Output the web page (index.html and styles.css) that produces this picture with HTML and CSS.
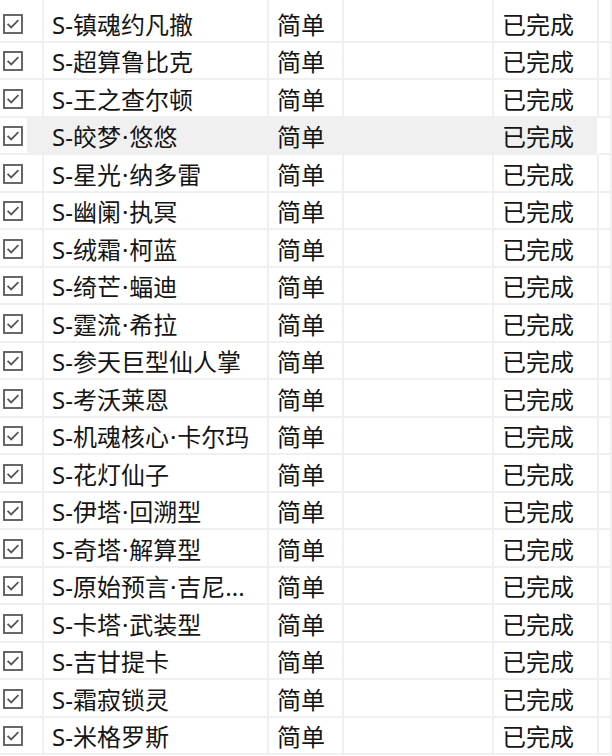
FILE: index.html
```html
<!DOCTYPE html>
<html lang="zh-CN">
<head>
<meta charset="utf-8">
<link rel="stylesheet" href="styles.css">
</head>
<body>
<div class="grid">
  <div class="top"><span class="c0"></span><span class="c1"></span><span class="c2"></span><span class="c3"></span><span class="c4"></span><span class="c5"></span></div>
</div>
<div class="grid" id="rows"></div>
<script src="app.js"></script>
</body>
</html>
```

FILE: app.js
```js
const names = [
  "S-镇魂约凡撤","S-超算鲁比克","S-王之查尔顿","S-皎梦·悠悠","S-星光·纳多雷",
  "S-幽阑·执冥","S-绒霜·柯蓝","S-绮芒·蝠迪","S-霆流·希拉","S-参天巨型仙人掌",
  "S-考沃莱恩","S-机魂核心·卡尔玛","S-花灯仙子","S-伊塔·回溯型","S-奇塔·解算型",
  "S-原始预言·吉尼...","S-卡塔·武装型","S-吉甘提卡","S-霜寂锁灵","S-米格罗斯"
];
const box = '<svg width="20" height="20" viewBox="0 0 20 20"><rect x="1" y="1" width="18" height="18" fill="#fff" stroke="#585858" stroke-width="1.8"/><path d="M4.6 9.8 L8.2 13.4 L15.4 6.2" fill="none" stroke="#555" stroke-width="1.8"/></svg>';
const host = document.getElementById('rows');
names.forEach((n, i) => {
  const r = document.createElement('div');
  r.className = 'row' + (i === 3 ? ' hl' : '');
  const name = n.replace(/·/g, '<span class="dot">·</span>');
  r.innerHTML =
    '<div class="cell c0">' + box + '</div>' +
    '<div class="cell c1">' + name + '</div>' +
    '<div class="cell c2">简单</div>' +
    '<div class="cell c3"></div>' +
    '<div class="cell c4">已完成</div>' +
    '<div class="cell c5"></div>';
  host.appendChild(r);
});
```

FILE: styles.css
```css
html, body {
  margin: 0;
  padding: 0;
  background: #ffffff;
}
body {
  width: 612px;
  height: 756px;
  overflow: hidden;
  font-family: "Noto Sans", "Noto Sans CJK SC", sans-serif;
  color: #151515;
}
.grid {
  display: flex;
  flex-direction: column;
}
.top, .row {
  display: grid;
  grid-template-columns: 44px 225px 75px 150px 105px 1fr;
}
.top {
  height: 5px;
}
.top span {
  border-right: 2px solid #f0f0f0;
}
.row {
  height: 37.5px;
  box-sizing: border-box;
}
.cell {
  border-right: 2px solid #f0f0f0;
  border-bottom: 2px solid #f0f0f0;
  display: flex;
  align-items: center;
  padding-left: 8px;
  font-size: 24px;
  line-height: 1;
  white-space: nowrap;
  overflow: hidden;
  padding-top: 4px;
}
.dot {
  font-family: "Noto Sans", sans-serif;
  margin: 0 1px;
}
.cell.c0 {
  padding-left: 3px;
  padding-top: 2px;
}
.cell.c0 svg {
  display: block;
}
.row.hl .cell {
  background: #f0f0f0;
  border-color: #f0f0f0;
}
.row.hl .cell.c0 {
  background: linear-gradient(to right, #ffffff 27px, #f0f0f0 27px);
  border-right-color: #f0f0f0;
}
.row.hl .cell.c4 {
  border-right-color: #ffffff;
}
.row.hl .cell.c5 {
  background: #ffffff;
}
```
